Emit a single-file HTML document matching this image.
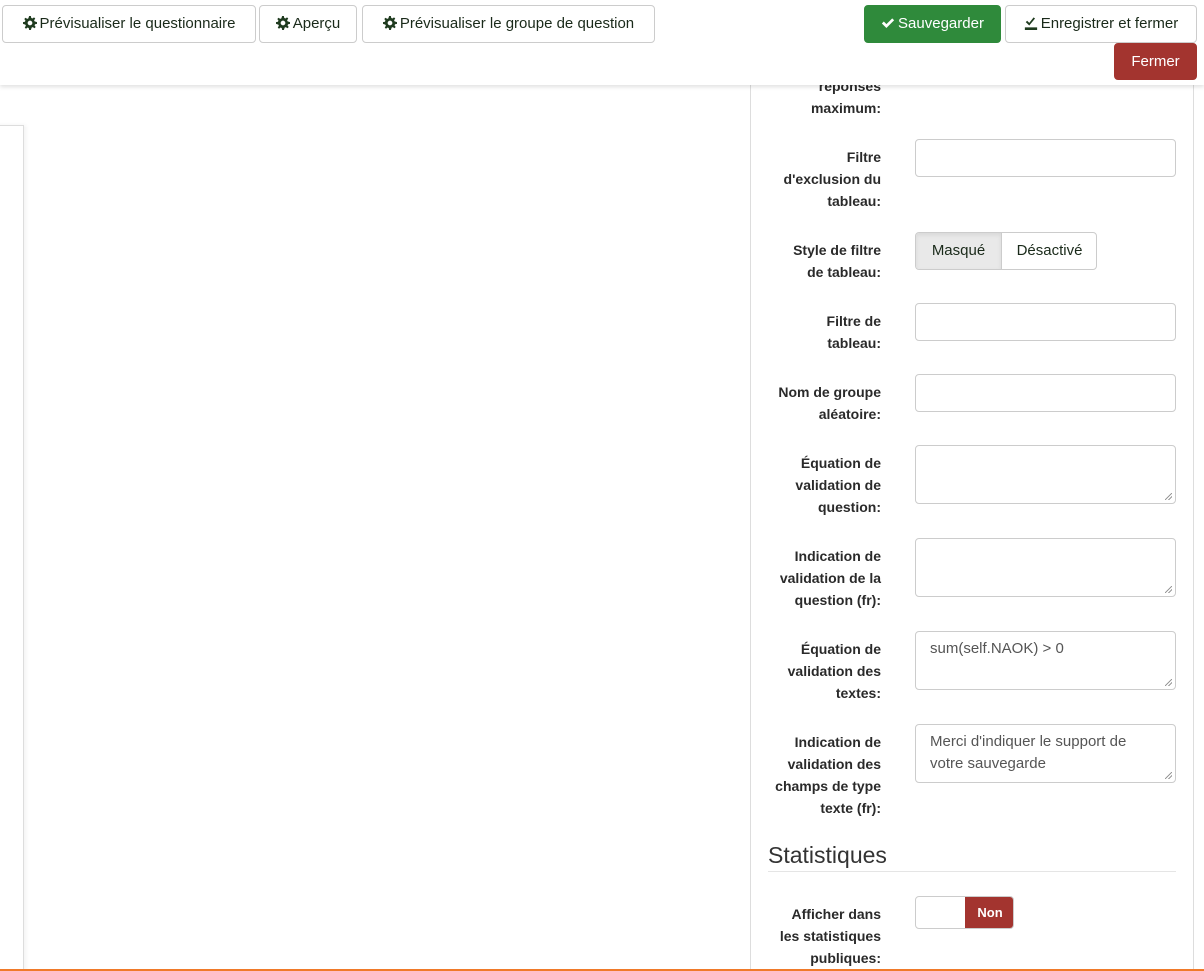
<!DOCTYPE html>
<html><head><meta charset="utf-8"><style>
*{box-sizing:border-box;margin:0;padding:0}
html,body{width:1204px;height:971px;overflow:hidden}
body{position:relative;background:#fff;font-family:"Liberation Sans",sans-serif;color:#333}
.hdr{position:absolute;left:0;top:0;width:1204px;height:85px;background:#fff;box-shadow:0 2px 4px rgba(0,0,0,.12);z-index:5}
.btn{position:absolute;top:5px;height:38px;border:1px solid #ccc;border-radius:4px;background:#fff;font-size:15px;line-height:36px;color:#1a2a1a;text-align:center;white-space:nowrap}
.g{display:inline-block;width:14px;height:14px;vertical-align:-2px;margin-right:3px}
.lbl{position:absolute;right:323px;width:135px;text-align:right;font-weight:bold;font-size:14px;line-height:22px;color:#2a2a2a}
.inp{position:absolute;left:915px;width:261px;border:1px solid #ccc;border-radius:4px;background:#fff;font-size:15px;color:#555;padding:6px 14px;line-height:22px}
.rs{position:absolute;right:3px;bottom:3px;width:7px;height:7px;background:linear-gradient(135deg,transparent 45%,#999 45%,#999 55%,transparent 55%,transparent 70%,#999 70%,#999 80%,transparent 80%)}
</style></head><body>
<div class="hdr">
<div class="btn" style="left:2px;width:254px"><svg class="g" viewBox="0 0 16 16"><path fill="#1f3b1f" d="M7 0h2l.4 2.2 1.3.6 1.9-1.3 1.4 1.4-1.3 1.9.6 1.3L16 7v2l-2.2.4-.6 1.3 1.3 1.9-1.4 1.4-1.9-1.3-1.3.6L9 16H7l-.4-2.2-1.3-.6-1.9 1.3-1.4-1.4 1.3-1.9-.6-1.3L0 9V7l2.2-.4.6-1.3L1.5 3.4 2.9 2l1.9 1.3 1.3-.6zM8 5.3A2.7 2.7 0 1 0 8 10.7 2.7 2.7 0 1 0 8 5.3z"/></svg>Prévisualiser le questionnaire</div>
<div class="btn" style="left:259px;width:98px"><svg class="g" viewBox="0 0 16 16"><path fill="#1f3b1f" d="M7 0h2l.4 2.2 1.3.6 1.9-1.3 1.4 1.4-1.3 1.9.6 1.3L16 7v2l-2.2.4-.6 1.3 1.3 1.9-1.4 1.4-1.9-1.3-1.3.6L9 16H7l-.4-2.2-1.3-.6-1.9 1.3-1.4-1.4 1.3-1.9-.6-1.3L0 9V7l2.2-.4.6-1.3L1.5 3.4 2.9 2l1.9 1.3 1.3-.6zM8 5.3A2.7 2.7 0 1 0 8 10.7 2.7 2.7 0 1 0 8 5.3z"/></svg>Aperçu</div>
<div class="btn" style="left:362px;width:293px"><svg class="g" viewBox="0 0 16 16"><path fill="#1f3b1f" d="M7 0h2l.4 2.2 1.3.6 1.9-1.3 1.4 1.4-1.3 1.9.6 1.3L16 7v2l-2.2.4-.6 1.3 1.3 1.9-1.4 1.4-1.9-1.3-1.3.6L9 16H7l-.4-2.2-1.3-.6-1.9 1.3-1.4-1.4 1.3-1.9-.6-1.3L0 9V7l2.2-.4.6-1.3L1.5 3.4 2.9 2l1.9 1.3 1.3-.6zM8 5.3A2.7 2.7 0 1 0 8 10.7 2.7 2.7 0 1 0 8 5.3z"/></svg>Prévisualiser le groupe de question</div>
<div class="btn" style="left:864px;width:137px;background:#2f8a3b;border-color:#2f8a3b;color:#fff"><svg class="g" viewBox="0 0 16 16"><path fill="#fff" d="M1 8.5l2.2-2.2 3 3L12.8 2.7 15 4.9 6.2 13.7z"/></svg>Sauvegarder</div>
<div class="btn" style="left:1005px;width:192px"><svg class="g" viewBox="0 0 16 16"><path fill="#1f3b1f" d="M2 7l1.6-1.6L6 7.8 11 1.5l1.6 1.4L6 10.8zM1 13h14v3H1z"/></svg>Enregistrer et fermer</div>
<div class="btn" style="left:1114px;top:43px;width:83px;height:37px;background:#a3342f;border-color:#a3342f;color:#fff">Fermer</div>
</div>

<div style="position:absolute;left:-10px;top:125px;width:34px;height:860px;border:1px solid #ddd;box-shadow:2px 0 4px rgba(0,0,0,.05)"></div>
<div style="position:absolute;left:750px;top:60px;width:444px;height:930px;border:1px solid #ddd"></div>

<div class="lbl" style="top:75px">réponses<br>maximum:</div>
<div class="lbl" style="top:146px">Filtre<br>d'exclusion du<br>tableau:</div>
<div class="inp" style="top:139px;height:38px"></div>
<div class="lbl" style="top:239px">Style de filtre<br>de tableau:</div>
<div style="position:absolute;left:915px;top:232px;width:182px;height:38px;border:1px solid #ccc;border-radius:4px;overflow:hidden;font-size:15px;line-height:36px;color:#1a2a1a">
<div style="position:absolute;left:0;top:0;width:86px;height:36px;background:#e9e9e9;border-right:1px solid #ccc;text-align:center;box-shadow:inset 0 2px 4px rgba(0,0,0,.08)">Masqué</div>
<div style="position:absolute;left:86px;top:0;width:95px;text-align:center">Désactivé</div></div>
<div class="lbl" style="top:310px">Filtre de<br>tableau:</div>
<div class="inp" style="top:303px;height:38px"></div>
<div class="lbl" style="top:381px">Nom de groupe<br>aléatoire:</div>
<div class="inp" style="top:374px;height:38px"></div>
<div class="lbl" style="top:452px">Équation de<br>validation de<br>question:</div>
<div class="inp" style="top:445px;height:59px"><span class="rs"></span></div>
<div class="lbl" style="top:545px">Indication de<br>validation de la<br>question (fr):</div>
<div class="inp" style="top:538px;height:59px"><span class="rs"></span></div>
<div class="lbl" style="top:638px">Équation de<br>validation des<br>textes:</div>
<div class="inp" style="top:631px;height:59px">sum(self.NAOK) &gt; 0<span class="rs"></span></div>
<div class="lbl" style="top:731px">Indication de<br>validation des<br>champs de type<br>texte (fr):</div>
<div class="inp" style="top:724px;height:59px">Merci d'indiquer le support de votre sauvegarde<span class="rs"></span></div>

<div style="position:absolute;left:768px;top:840px;font-size:23px;color:#333;line-height:30px">Statistiques</div>
<div style="position:absolute;left:768px;top:871px;width:408px;height:1px;background:#e5e5e5"></div>
<div class="lbl" style="top:903px">Afficher dans<br>les statistiques<br>publiques:</div>
<div style="position:absolute;left:915px;top:896px;width:99px;height:33px;border:1px solid #ccc;border-radius:4px;overflow:hidden">
<div style="position:absolute;left:49px;top:0;width:50px;height:33px;background:#a3342f;color:#fff;font-size:13px;font-weight:bold;line-height:31px;text-align:center">Non</div></div>

<div style="position:absolute;left:0;top:969px;width:1204px;height:2px;background:#f07a2a;z-index:6"></div>
</body></html>
